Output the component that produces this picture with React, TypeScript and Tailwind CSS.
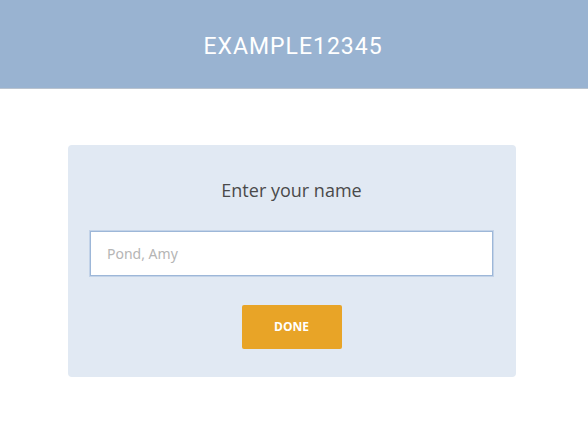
import React from "react";

export default function App() {
  return (
    <div className="w-[588px] h-[446px] bg-white" style={{ fontFamily: '"Open Sans", sans-serif' }}>
      <header className="h-[89px] bg-[#99b3d1] border-b border-[#b9c3cf] flex items-center justify-center">
        <h1
          className="text-white text-[23px] tracking-[1px] font-normal leading-none pt-[4px] pr-[2px]"
          style={{ fontFamily: 'Roboto, "DejaVu Sans", sans-serif' }}
        >
          EXAMPLE12345
        </h1>
      </header>
      <div className="flex pl-[68px] pt-[56px]">
        <div className="w-[448px] h-[232px] bg-[#e1e9f3] rounded-[4px] flex flex-col items-center pl-[22px] pr-[23px]">
          <p className="mt-[33px] text-[18px] text-[#4a4a4a] leading-[25px]">Enter your name</p>
          <input
            className="mt-[28px] w-full h-[45px] bg-white border border-[#9db7d8] ring-1 ring-[#c3d3e8] px-[16px] text-[14px] text-[#333] placeholder:text-[#b5b5b5] outline-none"
            style={{ fontFamily: '"Noto Sans", sans-serif' }}
            placeholder="Pond, Amy"
          />
          <button className="mt-[29px] w-[100px] h-[44px] bg-[#e8a427] rounded-[2px] text-white text-[12px] font-bold">
            DONE
          </button>
        </div>
      </div>
    </div>
  );
}
